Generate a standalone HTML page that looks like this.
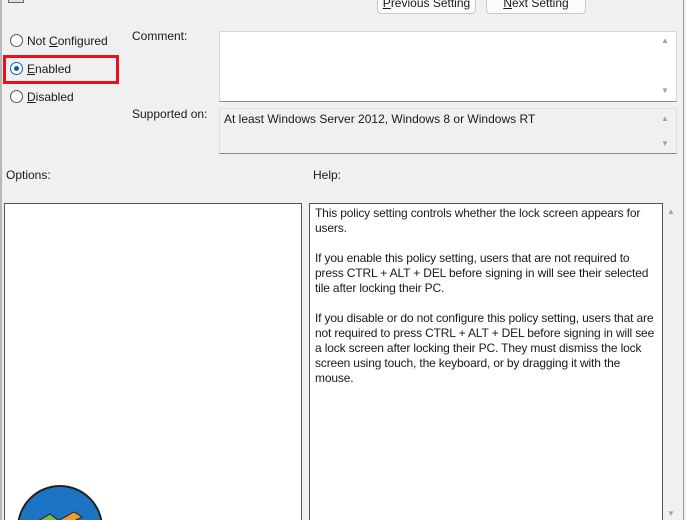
<!DOCTYPE html><html><head><style>
html,body{margin:0;width:686px;height:520px;overflow:hidden}
body{background:#f0f0f0;font-family:"Liberation Sans",sans-serif;font-size:12px;color:#1a1a1a;position:relative}
.a{position:absolute}
.btn{border:1px solid #c8c8c8;border-radius:4px;background:#fbfbfb;text-align:center;line-height:16px}
.rad{width:11px;height:11px;border:1px solid #555;border-radius:50%;background:#fff}
.sc{color:#a0a0a0;font-size:8px}
</style></head><body>
<div class="a" style="left:0;top:0;width:2px;height:520px;background:#b8b8b8"></div>
<div class="a" style="left:8px;top:0;width:14px;height:2px;border:1px solid #666;border-top:0;background:#ddd"></div>
<div class="a btn" style="left:377px;top:-6px;width:97px;height:18px"><u>P</u>revious Setting</div>
<div class="a btn" style="left:486px;top:-6px;width:98px;height:18px"><u>N</u>ext Setting</div>
<div class="a rad" style="left:10px;top:34px"></div>
<div class="a" style="left:27px;top:34px">Not <u>C</u>onfigured</div>
<div class="a" style="left:3px;top:55px;width:110px;height:23px;border:3px solid #e8101c"></div>
<div class="a rad" style="left:10px;top:62px;border-color:#0b5fad"><div style="width:5px;height:5px;background:#0b5fad;border-radius:50%;margin:3px"></div></div>
<div class="a" style="left:27px;top:62px"><u>E</u>nabled</div>
<div class="a rad" style="left:10px;top:90px"></div>
<div class="a" style="left:27px;top:90px"><u>D</u>isabled</div>
<div class="a" style="left:132px;top:29px">Comment:</div>
<div class="a" style="left:132px;top:107px">Supported on:</div>
<div class="a" style="left:219px;top:31px;width:456px;height:69px;background:#fff;border:1px solid #d8d8d8;border-bottom:1px solid #888"></div>
<div class="a sc" style="left:661px;top:36px">▲</div><div class="a sc" style="left:661px;top:86px">▼</div>
<div class="a" style="left:219px;top:108px;width:456px;height:44px;border:1px solid #e0e0e0;border-bottom:1px solid #888"></div>
<div class="a" style="left:224px;top:112px">At least Windows Server 2012, Windows 8 or Windows RT</div>
<div class="a sc" style="left:661px;top:114px">▲</div><div class="a sc" style="left:661px;top:139px">▼</div>
<div class="a" style="left:6px;top:168px">Options:</div>
<div class="a" style="left:313px;top:168px">Help:</div>
<div class="a" style="left:4px;top:203px;width:296px;height:317px;background:#fff;border:1px solid #555;border-bottom:0"></div>
<div class="a" style="left:309px;top:203px;width:352px;height:317px;background:#fff;border:1px solid #555;border-bottom:0"></div>
<div class="a" style="left:315px;top:206px;width:346px;line-height:15px;letter-spacing:-0.15px">This policy setting controls whether the lock screen appears for users.<br><br>If you enable this policy setting, users that are not required to press CTRL + ALT + DEL before signing in will see their selected tile after locking their PC.<br><br>If you disable or do not configure this policy setting, users that are not required to press CTRL + ALT + DEL before signing in will see a lock screen after locking their PC. They must dismiss the lock screen using touch, the keyboard, or by dragging it with the mouse.</div>
<div class="a sc" style="left:667px;top:207px">▲</div><div class="a sc" style="left:667px;top:509px">▼</div>
<div class="a" style="left:683px;top:0;width:1px;height:520px;background:#999"></div>
<svg class="a" style="left:16px;top:484px" width="90" height="36"><circle cx="44" cy="44" r="42" fill="#1d74c4" stroke="#222" stroke-width="2"/><path d="M20 38 L34 30 L42 36 L28 44Z" fill="#7bc043" stroke="#222"/><path d="M40 38 L58 28 L66 33 L48 42Z" fill="#f39a2b" stroke="#222"/></svg>
</body></html>
